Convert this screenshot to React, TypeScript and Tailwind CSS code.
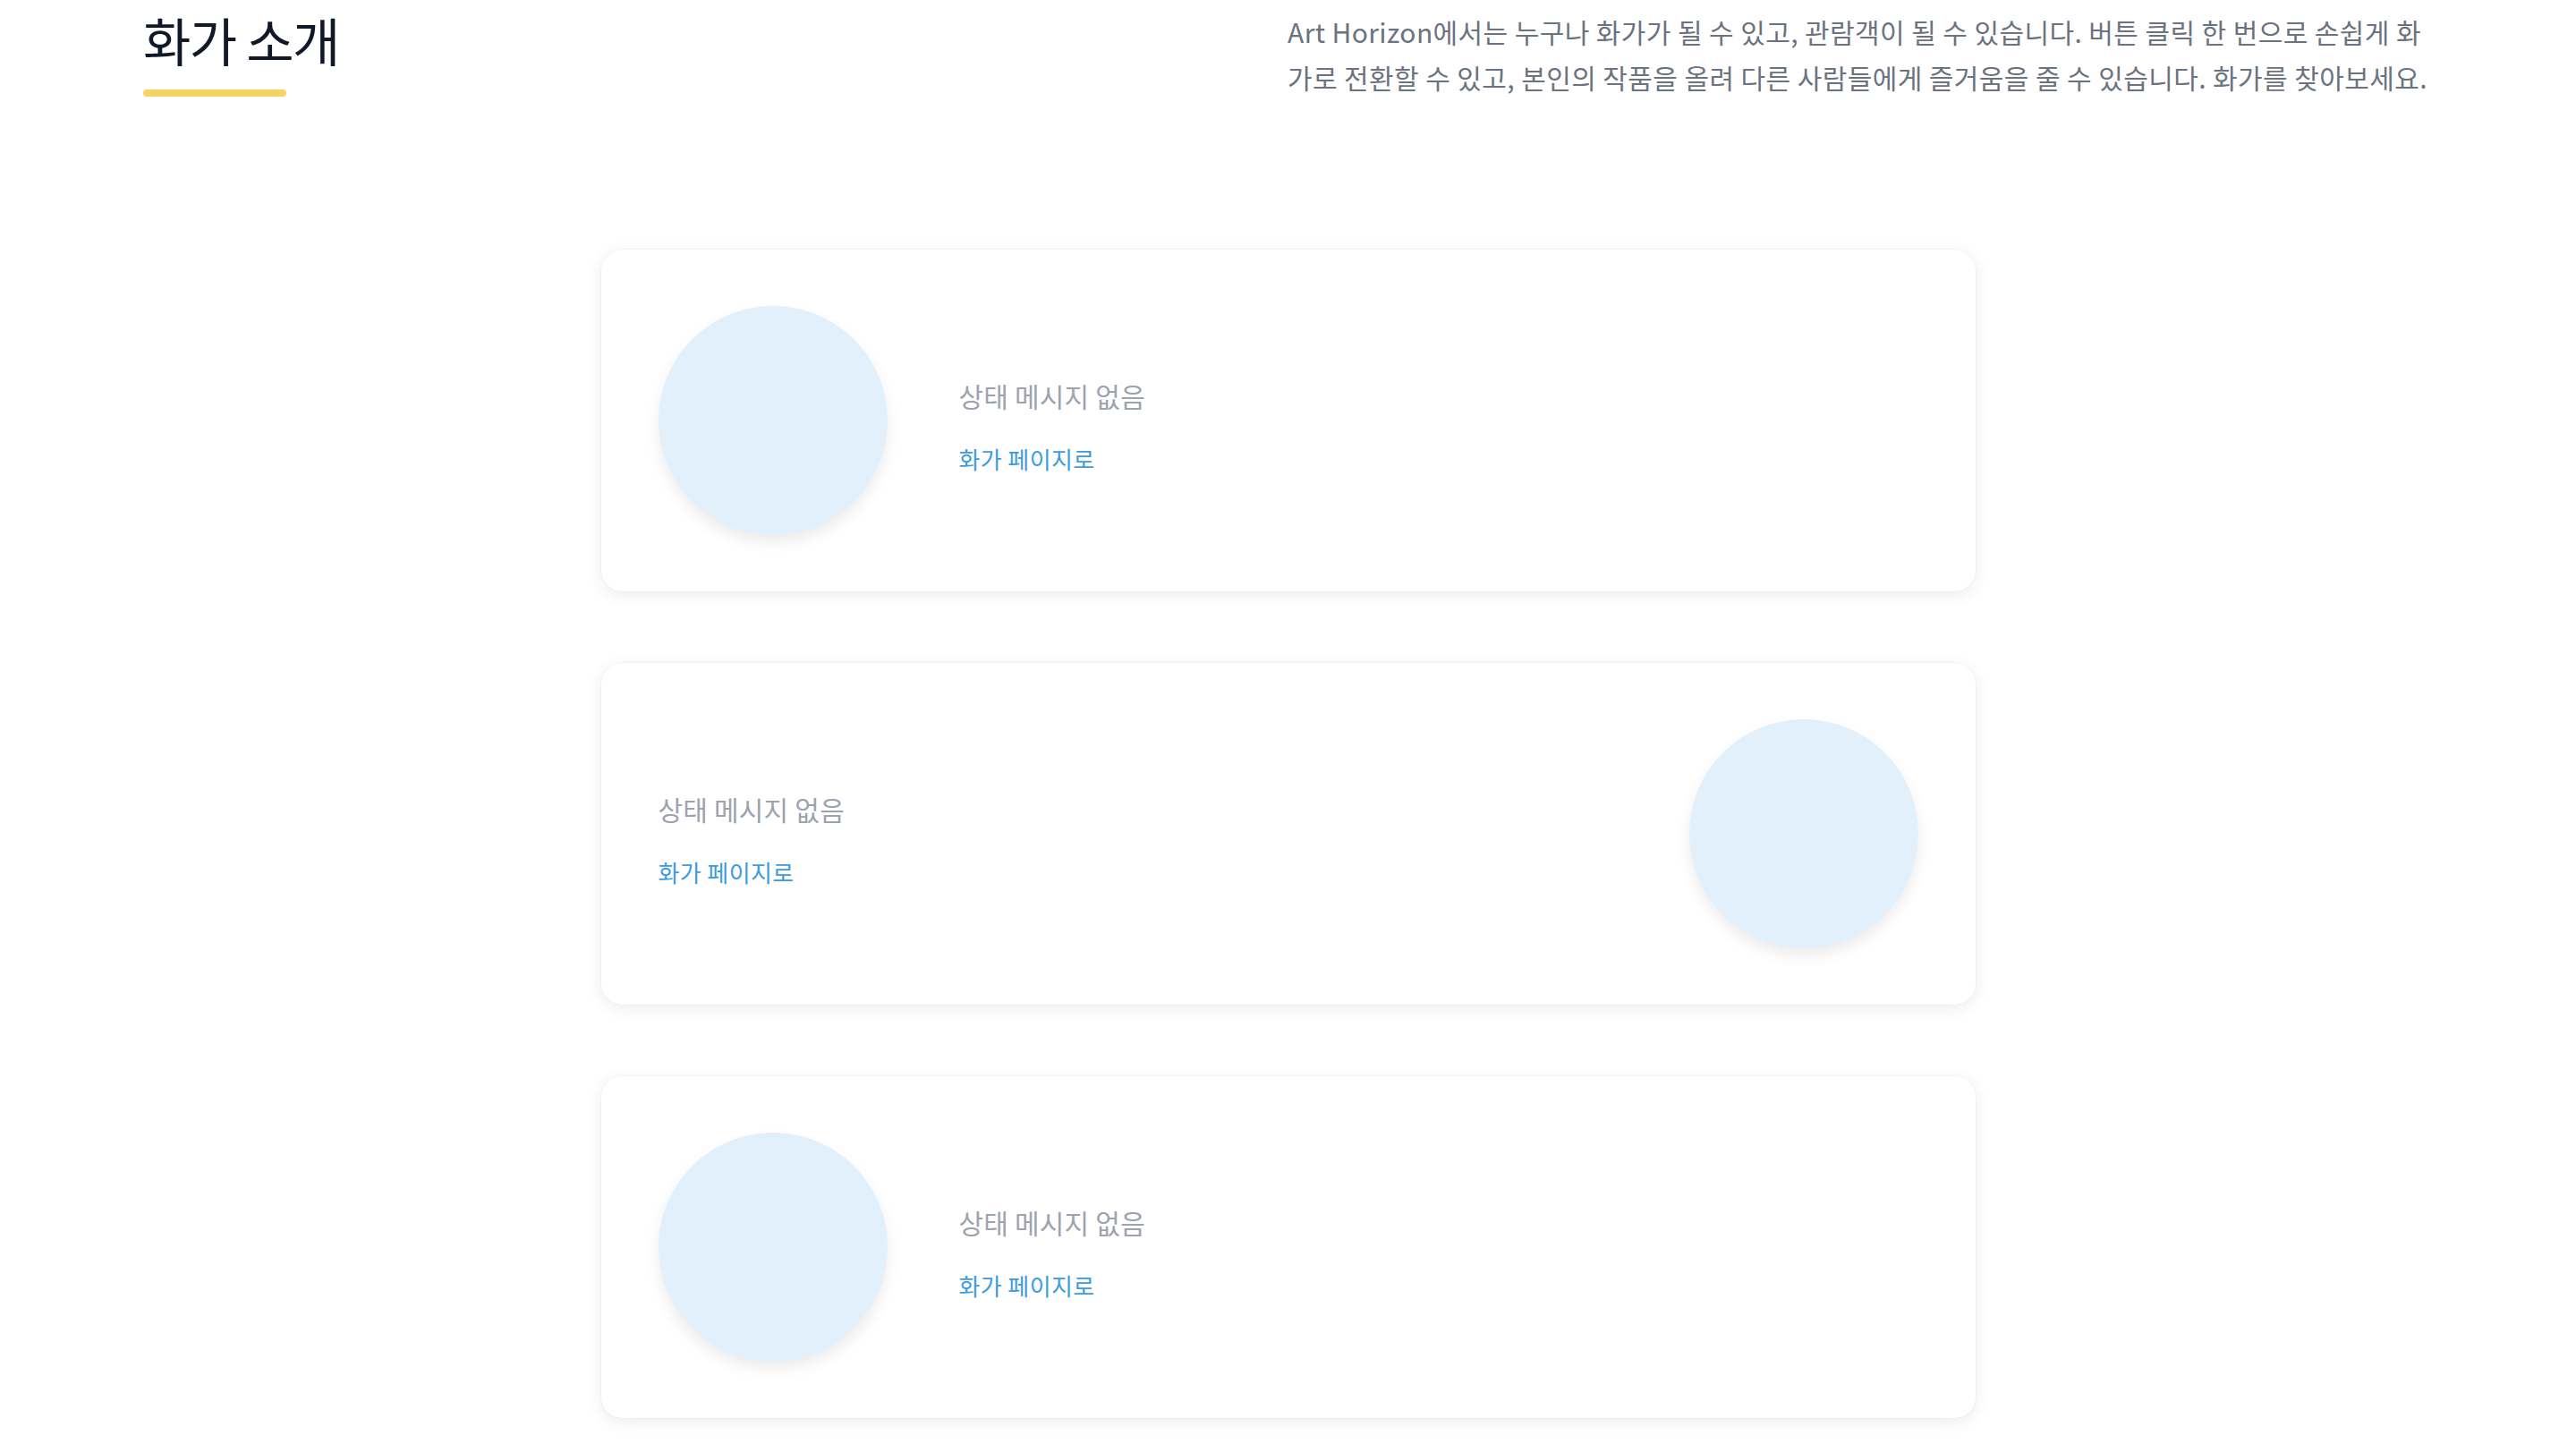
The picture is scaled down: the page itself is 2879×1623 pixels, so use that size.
import React from 'react';

type Artist = {
  id: number;
  status: string;
  reverse: boolean;
};

const artists: Artist[] = [
  { id: 1, status: '상태 메시지 없음', reverse: false },
  { id: 2, status: '상태 메시지 없음', reverse: true },
  { id: 3, status: '상태 메시지 없음', reverse: false },
];

const Avatar = () => (
  <div className="w-64 h-64 shrink-0 rounded-full bg-[#e2f0fc] shadow-[0_8px_16px_rgba(0,0,0,0.08)]"></div>
);

const ArtistInfo = ({ status }: { status: string }) => (
  <div className="flex flex-col mt-3">
    <p className="text-[30px] leading-[45px] tracking-[0.2px] text-[#9ca3af]">{status}</p>
    <a href="#" className="mt-[28px] text-[26px] leading-[39px] tracking-[0.4px] text-[#3d9be0]">화가 페이지로</a>
  </div>
);

const ArtistCard = ({ artist }: { artist: Artist }) => (
  <div className="w-[1536px] h-[382px] flex items-center bg-white rounded-3xl shadow-[0_0_0_1px_rgba(0,0,0,0.02),0_4px_18px_rgba(0,0,0,0.08)] px-16">
    {artist.reverse ? (
      <div className="flex-1 flex items-center justify-between">
        <ArtistInfo status={artist.status} />
        <Avatar />
      </div>
    ) : (
      <div className="flex-1 flex items-center gap-20">
        <Avatar />
        <ArtistInfo status={artist.status} />
      </div>
    )}
  </div>
);

const App: React.FC = () => {
  return (
    <div className="min-h-screen bg-white font-['Noto_Sans_CJK_KR','Noto_Sans',sans-serif] pb-20">
      <div className="flex justify-between items-start px-[160px] pt-[10px]">
        <div>
          <h1 className="text-[58px] leading-[69px] tracking-[-1.5px] text-[#111827]">화가 소개</h1>
          <div className="mt-[21px] w-40 h-2 rounded-full bg-[#f6d365]"></div>
        </div>
        <p className="w-[1280px] text-[30px] leading-[51px] tracking-[0.4px] text-[#6b7280]">
          Art Horizon에서는 누구나 화가가 될 수 있고, 관람객이 될 수 있습니다. 버튼 클릭 한 번으로 손쉽게 화가로 전환할 수 있고, 본인의 작품을 올려 다른 사람들에게 즐거움을 줄 수 있습니다. 화가를 찾아보세요.
        </p>
      </div>

      <div className="mt-[167px] flex flex-col items-center gap-20">
        {artists.map(a => (
          <ArtistCard key={a.id} artist={a} />
        ))}
      </div>
    </div>
  );
};

export default App;
